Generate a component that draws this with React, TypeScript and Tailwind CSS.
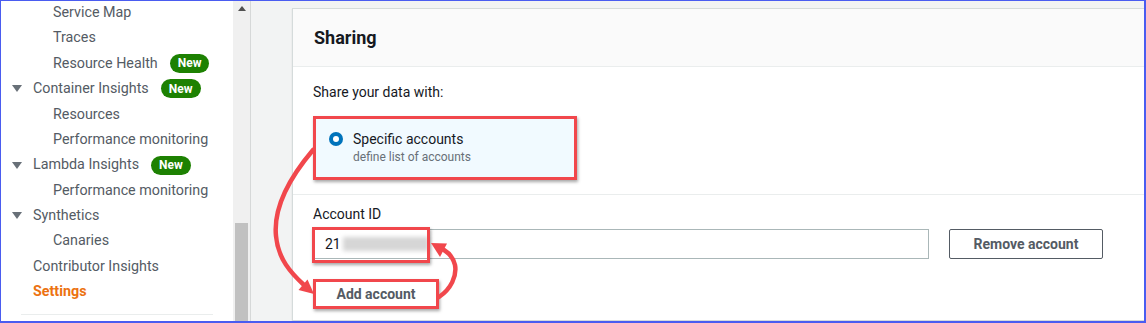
import React from "react";

const font = { fontFamily: "Roboto, 'Open Sans', 'Liberation Sans', sans-serif" };

function NewBadge() {
  return (
    <span className="ml-3 inline-flex h-[19px] items-center rounded-full bg-[#1d8102] px-[8px] text-[12px] font-bold text-white">
      New
    </span>
  );
}

function Caret() {
  return (
    <svg width="10" height="7" viewBox="0 0 10 7" className="mr-[11px] ml-[11px]">
      <polygon points="0,0 10,0 5,7" fill="#687078" />
    </svg>
  );
}

type NavItem = { label: string; level: 0 | 1; caret?: boolean; badge?: boolean; active?: boolean };

const items: NavItem[] = [
  { label: "Service Map", level: 1 },
  { label: "Traces", level: 1 },
  { label: "Resource Health", level: 1, badge: true },
  { label: "Container Insights", level: 0, caret: true, badge: true },
  { label: "Resources", level: 1 },
  { label: "Performance monitoring", level: 1 },
  { label: "Lambda Insights", level: 0, caret: true, badge: true },
  { label: "Performance monitoring", level: 1 },
  { label: "Synthetics", level: 0, caret: true },
  { label: "Canaries", level: 1 },
  { label: "Contributor Insights", level: 0 },
  { label: "Settings", level: 0, active: true },
];

function Sidebar() {
  return (
    <div className="w-[232px] shrink-0 overflow-hidden bg-white">
      <div className="-mt-[1px]">
        {items.map((it, i) => (
          <div
            key={i}
            className={
              "flex h-[25.4px] items-center text-[14.3px] " +
              (it.level === 1 ? "pl-[52px]" : it.caret ? "pl-0" : "pl-[32px]")
            }
          >
            {it.caret && <Caret />}
            <span className={it.active ? "font-bold text-[#ec7211]" : "text-[#545b64]"}>{it.label}</span>
            {it.badge && <NewBadge />}
          </div>
        ))}
        <div className="mx-[20px] mt-[9px] h-px bg-[#eaeded]" />
      </div>
    </div>
  );
}

function Scrollbar() {
  return (
    <div className="flex w-[17px] shrink-0 flex-col items-center bg-[#f0f0f0]">
      <svg width="8" height="5" viewBox="0 0 8 5" className="mt-[5px]">
        <polygon points="0,5 8,5 4,0" fill="#505050" />
      </svg>
      <div className="mt-[212px] w-[13px] flex-1 bg-[#c1c1c1]" />
    </div>
  );
}

function RadioTile() {
  return (
    <div className="flex h-[64px] w-[264px] items-start border-[3px] border-[#f1474c] bg-[#f1faff] pt-[11px] pl-[13px] shadow-[1px_2px_3px_rgba(0,0,0,0.35)]">
      <span className="mt-[2px] flex h-[14px] w-[14px] items-center justify-center rounded-full bg-[#0073bb]">
        <span className="h-[6px] w-[6px] rounded-full bg-white" />
      </span>
      <div className="ml-[10px] flex flex-col">
        <span className="text-[14px] leading-[18px] text-[#16191f]">Specific accounts</span>
        <span className="text-[12px] leading-[18px] text-[#687078]">define list of accounts</span>
      </div>
    </div>
  );
}

function Card() {
  return (
    <div className="mt-[7px] flex-1 border border-r-0 border-[#d5dbdb] bg-white shadow-[0_1px_1px_rgba(0,0,0,0.15)]">
      <div className="flex h-[58px] items-center border-b border-[#eaeded] bg-[#fafafa] px-[21px]">
        <h2 className="text-[18px] font-bold text-[#16191f]">Sharing</h2>
      </div>
      <div className="border-b border-[#eaeded] px-[20px] pt-[15px] pb-[14px]">
        <p className="text-[14px] leading-[20px] text-[#16191f]">Share your data with:</p>
        <div className="mt-[14px]">
          <RadioTile />
        </div>
      </div>
      <div className="px-[20px] pt-[9px] pb-[9px]">
        <p className="text-[14px] leading-[20px] text-[#16191f]">Account ID</p>
        <div className="mt-[5px] flex items-center gap-[20px]">
          <div className="relative flex h-[30px] w-[616px] items-center border border-[#aab7b8] bg-white pl-[11px] text-[14px] text-[#16191f]">
            <span>21</span>
            <span className="ml-[2px] h-[14px] w-[86px] bg-[#d6d6d6] blur-[2px]" />
            <span className="absolute -top-[3px] -left-[2px] h-[36px] w-[118px] border-[3px] border-[#f1474c] shadow-[1px_2px_3px_rgba(0,0,0,0.35)]" />
          </div>
          <button className="h-[30px] w-[154px] rounded-[2px] border border-[#545b64] bg-white text-[14px] font-bold text-[#545b64]">
            Remove account
          </button>
        </div>
        <button className="mt-[20px] h-[30px] w-[126px] border-[3px] border-[#f1474c] bg-white text-[14px] font-bold text-[#545b64] shadow-[1px_2px_3px_rgba(0,0,0,0.35)]">
          Add account
        </button>
      </div>
    </div>
  );
}

function Arrows() {
  return (
    <svg className="pointer-events-none absolute inset-0" width="1146" height="323" viewBox="0 0 1146 323">
      <g fill="none" stroke="#f1474c" strokeWidth="4.5" strokeLinecap="round">
        <path d="M312 149 C290 175 272 205 275 235 C277 258 290 272 303 284" />
        <path d="M438 296 C450 288 456 275 454 264 C452 256 448 252 443 249" />
      </g>
      <polygon points="313,293 297.5,289 306.5,278.5" fill="#f1474c" />
      <polygon points="430,242 446,242.5 439,256" fill="#f1474c" />
    </svg>
  );
}

export default function App() {
  return (
    <div
      className="relative h-[323px] w-[1146px] overflow-hidden border border-b-2 border-r-2 border-[#4a5cf0] bg-white"
      style={font}
    >
      <div className="flex h-full">
        <Sidebar />
        <Scrollbar />
        <div className="w-px shrink-0 bg-[#d6d8d8]" />
        <div className="flex flex-1 bg-[#f2f3f3] pl-[41px]">
          <Card />
        </div>
      </div>
      <Arrows />
    </div>
  );
}
